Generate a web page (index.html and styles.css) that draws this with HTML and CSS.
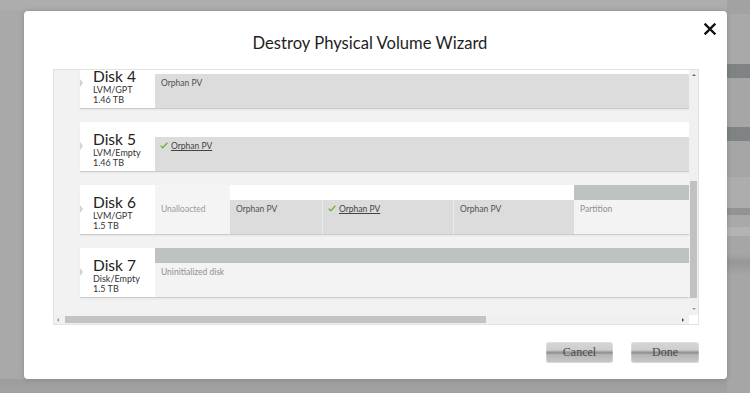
FILE: index.html
```html
<!DOCTYPE html>
<html>
<head>
  <title>Destroy Physical Volume Wizard</title>
  <link rel="stylesheet" href="styles.css">
</head>
<body>
  <div class="modal">
    <button class="close-btn" aria-label="Close">
      <svg width="12" height="12" viewBox="0 0 12 12">
        <path d="M1.5 1.5 L10.5 10.5 M10.5 1.5 L1.5 10.5" stroke="#111" stroke-width="2.4" stroke-linecap="square" fill="none"/>
      </svg>
    </button>

    <h1 class="title">Destroy Physical Volume Wizard</h1>

    <div class="panel">
      <div class="viewport">
        <div class="disks">

          <!-- Disk 4 -->
          <div class="disk">
            <div class="disk-label">
              <div class="disk-name">Disk 4</div>
              <div class="disk-meta">LVM/GPT</div>
              <div class="disk-meta">1.46 TB</div>
            </div>
            <div class="segments">
              <div class="seg seg-pv seg-fill">
                <div class="seg-bar"></div>
                <div class="seg-body">Orphan PV</div>
              </div>
            </div>
          </div>

          <!-- Disk 5 -->
          <div class="disk">
            <div class="disk-label">
              <div class="disk-name">Disk 5</div>
              <div class="disk-meta">LVM/Empty</div>
              <div class="disk-meta">1.46 TB</div>
            </div>
            <div class="segments">
              <div class="seg seg-pv seg-fill">
                <div class="seg-bar"></div>
                <div class="seg-body">
                  <span class="check"><svg width="8" height="7" viewBox="0 0 8 7"><path d="M0.6 3.6 L2.8 5.8 L7.4 0.8" stroke="#6fb23b" stroke-width="1.3" fill="none"/></svg></span><span class="picked">Orphan PV</span>
                </div>
              </div>
            </div>
          </div>

          <!-- Disk 6 -->
          <div class="disk">
            <div class="disk-label">
              <div class="disk-name">Disk 6</div>
              <div class="disk-meta">LVM/GPT</div>
              <div class="disk-meta">1.5 TB</div>
            </div>
            <div class="segments">
              <div class="seg seg-free w-75">
                <div class="seg-bar"></div>
                <div class="seg-body">Unalloacted</div>
              </div>
              <div class="seg seg-pv w-92">
                <div class="seg-bar"></div>
                <div class="seg-body">Orphan PV</div>
              </div>
              <div class="seg seg-pv seg-split w-131">
                <div class="seg-bar"></div>
                <div class="seg-body">
                  <span class="check"><svg width="8" height="7" viewBox="0 0 8 7"><path d="M0.6 3.6 L2.8 5.8 L7.4 0.8" stroke="#6fb23b" stroke-width="1.3" fill="none"/></svg></span><span class="picked">Orphan PV</span>
                </div>
              </div>
              <div class="seg seg-pv seg-split w-121">
                <div class="seg-bar"></div>
                <div class="seg-body">Orphan PV</div>
              </div>
              <div class="seg seg-part seg-fill">
                <div class="seg-bar"></div>
                <div class="seg-body">Partition</div>
              </div>
            </div>
          </div>

          <!-- Disk 7 -->
          <div class="disk">
            <div class="disk-label">
              <div class="disk-name">Disk 7</div>
              <div class="disk-meta">Disk/Empty</div>
              <div class="disk-meta">1.5 TB</div>
            </div>
            <div class="segments">
              <div class="seg seg-part seg-fill">
                <div class="seg-bar"></div>
                <div class="seg-body">Uninitialized disk</div>
              </div>
            </div>
          </div>

        </div>
      </div>

      <div class="vscroll">
        <div class="arrow arrow-up"></div>
        <div class="v-thumb"></div>
        <div class="spacer"></div>
        <div class="arrow arrow-down"></div>
      </div>

      <div class="hscroll">
        <div class="arrow arrow-left"></div>
        <div class="h-thumb"></div>
        <div class="spacer"></div>
        <div class="arrow arrow-right"></div>
      </div>

      <div class="corner"></div>
    </div>

    <div class="actions">
      <button class="wiz-btn btn-cancel">Cancel</button>
      <button class="wiz-btn btn-done">Done</button>
    </div>
  </div>
</body>
</html>
```

FILE: styles.css
```css
html, body {
  height: 100%;
}

body {
  margin: 0;
  padding: 11px 23px 0 24px;
  box-sizing: border-box;
  font-family: Lato, "Liberation Sans", sans-serif;
  background:
    linear-gradient(to bottom,
      #a2a2a2 0, #a2a2a2 14px,
      #a9a9a9 14px, #a9a9a9 64px,
      #7f8383 64px, #7f8383 78px,
      #a6a6a6 78px, #a6a6a6 127px,
      #7f8383 127px, #7f8383 141px,
      #a5a5a5 141px, #a5a5a5 177px,
      #adadad 177px, #adadad 208px,
      #939393 208px, #939393 215px,
      #a9a9a9 215px, #a9a9a9 227px,
      #b3b3b3 227px, #b3b3b3 236px,
      #a6a6a6 236px, #a6a6a6 254px,
      #979797 262px, #a6a6a6 276px) right top / 23px 100% no-repeat,
    linear-gradient(to bottom, #adadad 0, #adadad 10px, #a9a9a9 10px, #a9a9a9 378px, #9d9d9d 380px, #a2a2a2 393px);
}

.modal {
  position: relative;
  width: 703px;
  height: 368px;
  padding: 0 28px 0 29px;
  box-sizing: border-box;
  background-color: #fff;
  border-radius: 4px;
  box-shadow: 0 0 5px rgba(0, 0, 0, 0.18);
}

.close-btn {
  position: absolute;
  top: 12px;
  right: 11px;
  width: 12px;
  height: 12px;
  padding: 0;
  border: none;
  background: none;
  cursor: pointer;
  display: flex;
}

.title {
  margin: 0;
  padding: 22px 12px 16px 0;
  font-size: 16.6px;
  line-height: 20px;
  font-weight: 400;
  color: #1e1e1e;
  text-align: center;
}

/* scroll panel with drawn scrollbars */

.panel {
  display: grid;
  grid-template-columns: 1fr 9px;
  grid-template-rows: 245px 9px;
  height: 256px;
  box-sizing: border-box;
  border: 1px solid #e3e3e3;
  background-color: #f2f2f2;
}

.viewport {
  overflow: hidden;
}

.disks {
  display: flex;
  flex-direction: column;
  gap: 14px;
  margin-top: -11px;
  padding-left: 26px;
}

.disk {
  display: flex;
  height: 49px;
  background-color: #fff;
  box-shadow: 0 1px 0 #cbcbcb, 0 2px 2px rgba(0, 0, 0, 0.05);
}

.disk-label {
  position: relative;
  width: 75px;
  flex-shrink: 0;
  padding: 8px 0 0 13px;
  box-sizing: border-box;
  background-color: #fff;
  color: #222;
}

.disk-label::before {
  content: "";
  position: absolute;
  left: 0;
  top: 20px;
  border-top: 4px solid transparent;
  border-bottom: 4px solid transparent;
  border-left: 3px solid #d2d2d2;
}

.disk-name {
  font-size: 15.5px;
  line-height: 18px;
}

.disk-meta {
  font-size: 9px;
  line-height: 10px;
  color: #333;
}

.segments {
  flex: 1;
  display: flex;
}

.seg {
  display: flex;
  flex-direction: column;
  flex-shrink: 0;
}

.seg-fill {
  flex: 1;
}

.w-75 { width: 75px; }
.w-92 { width: 92px; }
.w-131 { width: 131px; }
.w-121 { width: 121px; }

.seg-bar {
  height: 15px;
}

.seg-body {
  flex: 1;
  display: flex;
  align-items: flex-start;
  padding: 4px 0 0 6px;
  font-size: 8.5px;
  line-height: 10px;
  white-space: nowrap;
}

.seg-pv .seg-bar {
  background-color: #fff;
}

.seg-pv .seg-body {
  background-color: #dcdcdd;
  color: #505050;
}

.seg-split .seg-body {
  border-left: 1px solid #ececec;
}

.seg-free .seg-bar,
.seg-free .seg-body {
  background-color: #f4f4f4;
  color: #9a9a9a;
}

.seg-part .seg-bar {
  background-color: #bec2c2;
}

.seg-part .seg-body {
  background-color: #f3f3f3;
  color: #8f8f8f;
}

.check {
  display: flex;
  margin: 1px 3px 0 -1px;
}

.picked {
  text-decoration: underline;
  color: #444;
}

.vscroll,
.hscroll {
  display: flex;
  align-items: center;
  background-color: #f0f0f0;
}

.vscroll {
  flex-direction: column;
}

.v-thumb {
  width: 7px;
  height: 117px;
  margin-top: 105px;
  background-color: #c1c1c1;
}

.h-thumb {
  width: 421px;
  height: 7px;
  background-color: #c3c3c3;
}

.spacer {
  flex: 1;
}

.arrow {
  width: 0;
  height: 0;
  flex-shrink: 0;
}

.arrow-up {
  margin-top: 4px;
  border-left: 2px solid transparent;
  border-right: 2px solid transparent;
  border-bottom: 2px solid #666;
}

.arrow-down {
  margin-bottom: 5px;
  border-left: 2px solid transparent;
  border-right: 2px solid transparent;
  border-top: 2px solid #999;
}

.arrow-left {
  margin: 0 6px 0 3px;
  border-top: 2px solid transparent;
  border-bottom: 2px solid transparent;
  border-right: 2px solid #999;
}

.arrow-right {
  margin-right: 5px;
  border-top: 2px solid transparent;
  border-bottom: 2px solid transparent;
  border-left: 2px solid #444;
}

.corner {
  background-color: #fff;
}

/* footer buttons */

.actions {
  display: flex;
  justify-content: flex-end;
  gap: 18px;
  margin-top: 17px;
}

.wiz-btn {
  height: 21px;
  padding: 0;
  border: none;
  border-radius: 3px;
  font-family: "Liberation Serif", serif;
  font-size: 12px;
  color: #4a4a4a;
  cursor: pointer;
  background: linear-gradient(to bottom, #d6d6d6 0%, #cecece 38%, #a5a5a5 46%, #8c8c8c 52%, #b5b5b5 60%, #c9c9c9 100%);
  box-shadow: inset 0 0 0 1px rgba(255, 255, 255, 0.25);
}

.btn-cancel {
  width: 67px;
}

.btn-done {
  width: 68px;
}
```
